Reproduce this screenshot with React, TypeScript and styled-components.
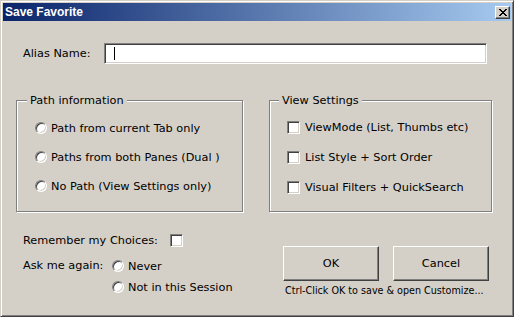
import { FC } from 'react'
import styled, { createGlobalStyle } from 'styled-components'

const GlobalStyle = createGlobalStyle`
  body {
    margin: 0;
    background: #d4d0c8;
    font-family: "DejaVu Sans", Verdana, sans-serif;
    font-size: 11.3px;
    color: #000;
  }
`

const Window = styled.div`
  width: 514px;
  height: 317px;
  box-sizing: border-box;
  background: #d4d0c8;
  border: 1px solid;
  border-color: #d4d0c8 #404040 #404040 #d4d0c8;
  box-shadow: inset 1px 1px 0 #fff, inset -1px -1px 0 #808080;
  padding: 2px;
  display: flex;
  flex-direction: column;
`

const TitleBar = styled.div`
  height: 18px;
  display: flex;
  align-items: center;
  justify-content: space-between;
  padding: 0 1px 0 2px;
  background: linear-gradient(to right, #0a246a, #a6caf0);
`

const Title = styled.span`
  font-family: "Liberation Sans", Arial, sans-serif;
  font-weight: bold;
  font-size: 12px;
  color: #fff;
`

const CloseButton = styled.button`
  width: 15px;
  height: 13px;
  padding: 0;
  box-sizing: border-box;
  background: #d4d0c8;
  border: 1px solid;
  border-color: #fff #404040 #404040 #fff;
  box-shadow: inset -1px -1px 0 #808080;
  display: flex;
  align-items: center;
  justify-content: center;
`

const Body = styled.div`
  flex: 1;
  display: flex;
  flex-direction: column;
`

const AliasRow = styled.div`
  margin: 22px 0 0 20px;
  height: 21px;
  display: flex;
  align-items: center;
`

const AliasLabel = styled.span`
  width: 81px;
`

const TextBox = styled.div`
  width: 383px;
  height: 21px;
  box-sizing: border-box;
  background: #fff;
  border: 1px solid;
  border-color: #808080 #fff #fff #808080;
  box-shadow: inset 1px 1px 0 #404040, inset -1px -1px 0 #d4d0c8;
  padding-left: 9px;
  display: flex;
  align-items: center;
`

const Caret = styled.span`
  width: 1px;
  height: 13px;
  background: #000;
`

const GroupsRow = styled.div`
  margin-top: 36px;
  padding-left: 13px;
  display: flex;
  gap: 26px;
`

const GroupBox = styled.div<{ $width: number }>`
  width: ${(p) => p.$width}px;
  height: 112px;
  box-sizing: border-box;
  border: 1px solid #808080;
  box-shadow: inset 1px 1px 0 #fff, 1px 1px 0 #fff;
  display: flex;
  flex-direction: column;
  align-items: flex-start;
`

const Legend = styled.span<{ $indent: number }>`
  margin: -8px 0 0 ${(p) => p.$indent}px;
  padding: 0 3px;
  line-height: 15px;
  background: #d4d0c8;
`

const OptionList = styled.div<{ $top: number; $gap: number; $left: number }>`
  margin-top: ${(p) => p.$top}px;
  padding-left: ${(p) => p.$left}px;
  display: flex;
  flex-direction: column;
  gap: ${(p) => p.$gap}px;
`

const Option = styled.label`
  height: 16px;
  display: flex;
  align-items: center;
  gap: 4px;
  white-space: nowrap;
`

const Radio = styled.span`
  width: 12px;
  height: 12px;
  flex: none;
  box-sizing: border-box;
  border-radius: 50%;
  background: #fff;
  border: 1px solid;
  border-color: #808080 #fff #fff #808080;
  box-shadow: inset 1px 1px 0 #404040, inset -1px -1px 0 #d4d0c8;
`

const CheckBox = styled.span`
  width: 13px;
  height: 13px;
  flex: none;
  box-sizing: border-box;
  background: #fff;
  border: 1px solid;
  border-color: #808080 #fff #fff #808080;
  box-shadow: inset 1px 1px 0 #404040, inset -1px -1px 0 #d4d0c8;
`

const CheckOption = styled(Option)`
  gap: 5px;
`

const BottomRow = styled.div`
  margin-top: 20px;
  padding-left: 20px;
  display: grid;
  grid-template-columns: 260px 1fr;
`

const ChoicesColumn = styled.div`
  display: flex;
  flex-direction: column;
  gap: 10px;
`

const RememberRow = styled.div`
  height: 16px;
  display: flex;
  align-items: center;
  gap: 12px;
`

const AskGrid = styled.div`
  display: grid;
  grid-template-columns: 89px auto;
  align-items: start;
`

const AskLabel = styled.span`
  line-height: 15px;
`

const AskOptions = styled.div`
  display: flex;
  flex-direction: column;
  gap: 5px;
`

const ButtonsColumn = styled.div`
  margin-top: 14px;
  display: flex;
  flex-direction: column;
`

const ButtonRow = styled.div`
  display: flex;
  gap: 14px;
`

const DialogButton = styled.button`
  width: 96px;
  height: 35px;
  box-sizing: border-box;
  background: #d4d0c8;
  border: 1px solid;
  border-color: #fff #404040 #404040 #fff;
  box-shadow: inset -1px -1px 0 #808080;
  font-family: "DejaVu Sans", Verdana, sans-serif;
  font-size: 11.3px;
  color: #000;
  padding: 0;
`

const Hint = styled.span`
  margin-top: 4px;
  padding-left: 2px;
  font-size: 9.6px;
  line-height: 12px;
  white-space: nowrap;
`

const CloseGlyph: FC = () => (
  <svg width="8" height="7" viewBox="0 0 8 7" shapeRendering="crispEdges">
    <path
      d="M0 0h2v1H0zM6 0h2v1H6zM1 1h2v1H1zM5 1h2v1H5zM2 2h4v1H2zM3 3h2v1H3zM2 4h4v1H2zM1 5h2v1H1zM5 5h2v1H5zM0 6h2v1H0zM6 6h2v1H6z"
      fill="#000"
    />
  </svg>
)

const pathOptions = [
  'Path from current Tab only',
  'Paths from both Panes (Dual )',
  'No Path (View Settings only)',
]

const viewOptions = [
  'ViewMode (List, Thumbs etc)',
  'List Style + Sort Order',
  'Visual Filters + QuickSearch',
]

const App: FC = () => {
  return (
    <>
      <GlobalStyle />
      <Window>
        <TitleBar>
          <Title>Save Favorite</Title>
          <CloseButton aria-label="Close">
            <CloseGlyph />
          </CloseButton>
        </TitleBar>
        <Body>
          <AliasRow>
            <AliasLabel>Alias Name:</AliasLabel>
            <TextBox>
              <Caret />
            </TextBox>
          </AliasRow>

          <GroupsRow>
            <GroupBox $width={227}>
              <Legend $indent={10}>Path information</Legend>
              <OptionList $top={12} $gap={13} $left={18}>
                {pathOptions.map((text) => (
                  <Option key={text}>
                    <Radio />
                    {text}
                  </Option>
                ))}
              </OptionList>
            </GroupBox>
            <GroupBox $width={223}>
              <Legend $indent={9}>View Settings</Legend>
              <OptionList $top={11} $gap={14} $left={17}>
                {viewOptions.map((text) => (
                  <CheckOption key={text}>
                    <CheckBox />
                    {text}
                  </CheckOption>
                ))}
              </OptionList>
            </GroupBox>
          </GroupsRow>

          <BottomRow>
            <ChoicesColumn>
              <RememberRow>
                Remember my Choices:
                <CheckBox />
              </RememberRow>
              <AskGrid>
                <AskLabel>Ask me again:</AskLabel>
                <AskOptions>
                  <Option>
                    <Radio />
                    Never
                  </Option>
                  <Option>
                    <Radio />
                    Not in this Session
                  </Option>
                </AskOptions>
              </AskGrid>
            </ChoicesColumn>
            <ButtonsColumn>
              <ButtonRow>
                <DialogButton>OK</DialogButton>
                <DialogButton>Cancel</DialogButton>
              </ButtonRow>
              <Hint>Ctrl-Click OK to save &amp; open Customize...</Hint>
            </ButtonsColumn>
          </BottomRow>
        </Body>
      </Window>
    </>
  )
}

export default App
